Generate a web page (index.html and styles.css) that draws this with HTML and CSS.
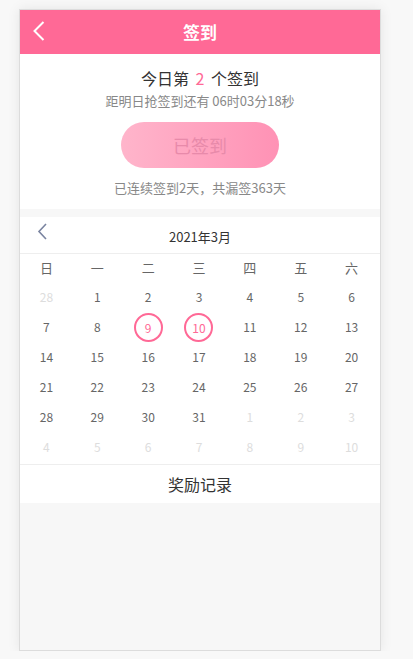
FILE: index.html
```html
<!DOCTYPE html>
<html lang="zh">
<head>
<meta charset="utf-8">
<title>签到</title>
<link rel="stylesheet" href="styles.css">
</head>
<body>
<div class="phone">
  <header class="topbar">
    <svg class="back" width="12" height="20" viewBox="0 0 12 20"><path d="M10.5 1 L1.5 10 L10.5 19" fill="none" stroke="#fff" stroke-width="2"/></svg>
    <h1 class="title">签到</h1>
  </header>
  <section class="sign">
    <p class="rank">今日第 <span class="num">2</span> 个签到</p>
    <p class="countdown">距明日抢签到还有 06时03分18秒</p>
    <div class="btn">已签到</div>
    <p class="stat">已连续签到2天，共漏签363天</p>
  </section>
  <section class="calendar">
    <div class="cal-head">
      <svg class="prev" width="11" height="17" viewBox="0 0 11 17"><path d="M9 1 L2 8.5 L9 16" fill="none" stroke="#7a84a0" stroke-width="1.6"/></svg>
      <span class="month">2021年3月</span>
    </div>
    <div class="grid weekdays">
      <span>日</span><span>一</span><span>二</span><span>三</span><span>四</span><span>五</span><span>六</span>
    </div>
    <div class="grid days">
      <span class="other">28</span><span>1</span><span>2</span><span>3</span><span>4</span><span>5</span><span>6</span>
      <span>7</span><span>8</span><span class="signed"><i>9</i></span><span class="signed"><i>10</i></span><span>11</span><span>12</span><span>13</span>
      <span>14</span><span>15</span><span>16</span><span>17</span><span>18</span><span>19</span><span>20</span>
      <span>21</span><span>22</span><span>23</span><span>24</span><span>25</span><span>26</span><span>27</span>
      <span>28</span><span>29</span><span>30</span><span>31</span><span class="other">1</span><span class="other">2</span><span class="other">3</span>
      <span class="other">4</span><span class="other">5</span><span class="other">6</span><span class="other">7</span><span class="other">8</span><span class="other">9</span><span class="other">10</span>
    </div>
  </section>
  <div class="reward">奖励记录</div>
</div>
</body>
</html>
```
FILE: styles.css
```css
* { box-sizing: border-box; }
html, body { margin: 0; padding: 0; }
body {
  background: #f8f8f8;
  font-family: "Noto Sans CJK SC", "Noto Sans", sans-serif;
}
.phone {
  margin: 9px 0 0 19px;
  width: 362px;
  height: 642px;
  border: 1px solid #dcdcdc;
  background: #f7f7f7;
  box-shadow: 0 0 12px rgba(0, 0, 0, 0.08);
  overflow: hidden;
}
.topbar {
  position: relative;
  height: 44px;
  background: #ff6996;
  display: flex;
  align-items: center;
  justify-content: center;
}
.back {
  position: absolute;
  left: 13px;
  top: 11px;
}
.title {
  margin: 0;
  color: #fff;
  font-size: 17px;
  font-weight: bold;
  line-height: 44px;
}
.sign {
  background: #fff;
  padding: 13px 0 11px;
  display: flex;
  flex-direction: column;
  align-items: center;
}
.sign p { margin: 0; }
.rank {
  font-size: 16px;
  line-height: 22px;
  color: #333;
}
.rank .num { color: #ff6996; padding: 0 3px; }
.countdown {
  margin-top: 2px !important;
  font-size: 13px;
  line-height: 20px;
  color: #888;
}
.btn {
  margin-top: 11px;
  width: 158px;
  height: 46px;
  border-radius: 23px;
  background: linear-gradient(90deg, #ffb5cb, #ff92b5);
  color: #e88aaa;
  font-size: 18px;
  line-height: 46px;
  text-align: center;
}
.stat {
  margin-top: 10px !important;
  font-size: 13px;
  line-height: 20px;
  color: #888;
}
.calendar {
  margin-top: 8px;
  background: #fff;
  padding-bottom: 3px;
  border-bottom: 1px solid #eee;
}
.cal-head {
  position: relative;
  height: 37px;
  border-bottom: 1px solid #eee;
  display: flex;
  align-items: center;
  justify-content: center;
}
.prev {
  position: absolute;
  left: 17px;
  top: 6px;
}
.month {
  font-size: 13px;
  color: #333;
  padding-top: 2px;
}
.grid {
  display: grid;
  grid-template-columns: repeat(7, 1fr);
  padding: 0 3px 0 1px;
}
.grid span {
  display: flex;
  align-items: center;
  justify-content: center;
  font-size: 12px;
  color: #666;
}
.weekdays span { height: 27px; font-size: 13px; }
.days span { height: 30px; }
.days span.other { color: #ddd; }
.days .signed i {
  font-style: normal;
  width: 29px;
  height: 29px;
  margin-top: 3px;
  border: 2px solid #ff6996;
  border-radius: 50%;
  color: #ff6996;
  display: flex;
  align-items: center;
  justify-content: center;
}
.reward {
  background: #fff;
  height: 38px;
  line-height: 38px;
  text-align: center;
  font-size: 16px;
  color: #333;
}
```
